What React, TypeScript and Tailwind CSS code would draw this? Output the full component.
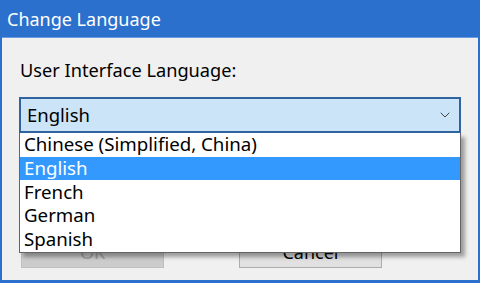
import { ChevronDown } from 'lucide-react'

const languages = ['Chinese (Simplified, China)', 'English', 'French', 'German', 'Spanish']

export default function App() {
  const selected = 'English'

  return (
    <div className="w-[480px] h-[283px] flex flex-col bg-[#2a70cc] px-[2px] pb-[3px] font-['Segoe_UI','Noto_Sans',sans-serif] overflow-hidden">
      {/* Title bar */}
      <div className="h-[37px] flex items-center px-[5px] text-white text-[18px] leading-none">
        Change Language
      </div>
      <div className="h-px bg-[#6a9ce0]" />

      {/* Body */}
      <div className="flex-1 bg-[#f0f0f0] flex flex-col px-[17px] pt-[22px] text-black">
        <div className="text-[18.2px] leading-[20px] pl-[1px]">User Interface Language:</div>

        <div className="relative mt-[17px]">
          <div className="h-[36px] flex items-center justify-between bg-[#cce4f7] border-2 border-[#31649f] pl-[6px] pr-[6px] text-[18.5px]">
            <span>{selected}</span>
            <ChevronDown className="w-[16px] h-[16px] text-[#444]" strokeWidth={1.5} />
          </div>

          {/* Dropdown list */}
          <div className="absolute left-0 right-0 top-full z-10 bg-white border border-t-0 border-[#646464] shadow-[4px_4px_4px_rgba(0,0,0,0.35)] flex flex-col pb-[1px]">
            {languages.map(lang => (
              <div
                key={lang}
                className={`h-[23.6px] flex items-center pl-[4px] text-[18.7px] leading-none ${lang === selected ? 'bg-[#3399ff] text-white' : 'text-black'}`}
              >
                {lang}
              </div>
            ))}
          </div>
        </div>

        {/* Buttons */}
        <div className="flex mt-[103px] pl-[2px] gap-[75px]">
          <div className="w-[143px] h-[32px] flex items-center justify-center bg-[#cccccc] border border-[#bfbfbf] text-[#a0a0a0] text-[18px]">
            OK
          </div>
          <div className="w-[143px] h-[32px] flex items-center justify-center bg-[#e1e1e1] border border-[#adadad] text-black text-[18px]">
            Cancel
          </div>
        </div>
      </div>
    </div>
  )
}
